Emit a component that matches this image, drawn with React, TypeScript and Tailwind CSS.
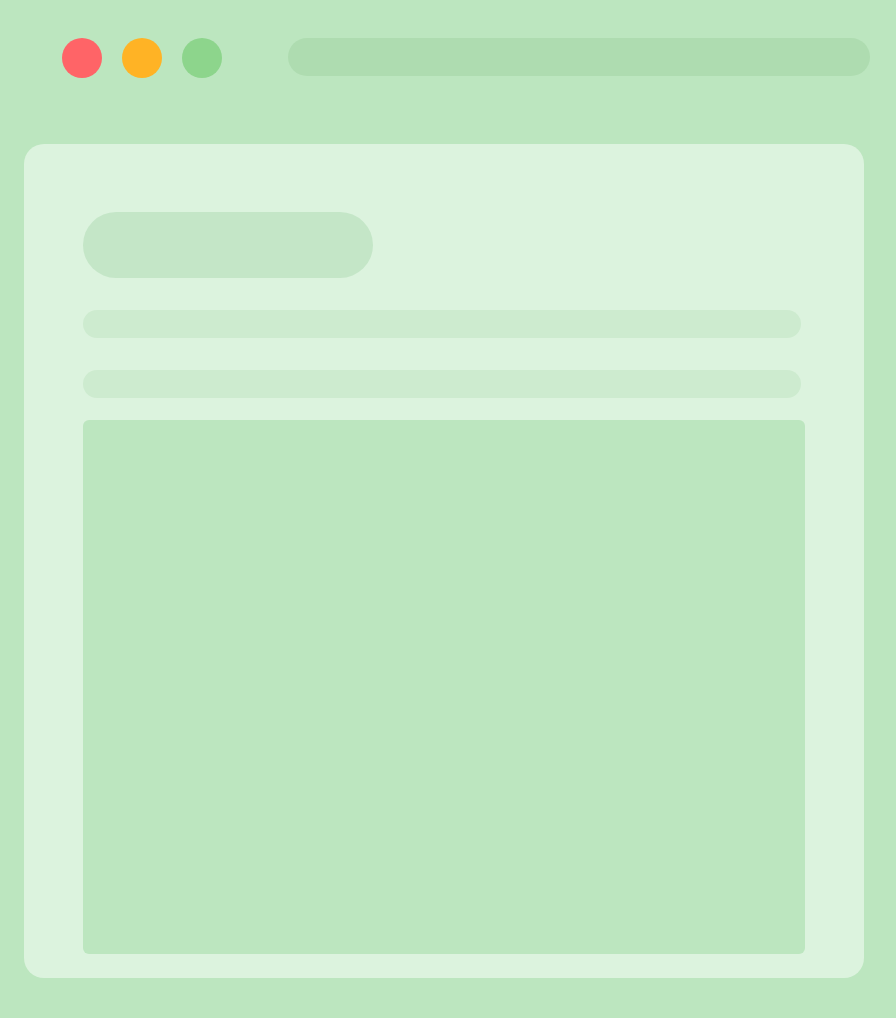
export default function App() {
  return (
    <div className="flex min-h-[1018px] w-full flex-col bg-[#bce6bf] font-['Liberation_Sans',sans-serif]">
      {/* window chrome */}
      <div className="flex items-start pl-[62px] pr-[26px] pt-[38px]">
        <div className="flex gap-5">
          <span className="h-10 w-10 rounded-full bg-[#ff6467]" />
          <span className="h-10 w-10 rounded-full bg-[#ffb325]" />
          <span className="h-10 w-10 rounded-full bg-[#8dd58c]" />
        </div>
        <div className="ml-[66px] h-[38px] flex-1 rounded-full bg-[#aedcb0]" />
      </div>

      {/* page card */}
      <div className="mx-6 mt-[66px] flex h-[834px] w-[840px] flex-col rounded-[20px] bg-[#dcf3de] pl-[59px] pt-[68px]">
        <div className="h-[66px] w-[290px] rounded-full bg-[#c4e6c7]" />
        <div className="mt-8 h-7 w-[718px] rounded-full bg-[#cdebcf]" />
        <div className="mt-8 h-7 w-[718px] rounded-full bg-[#cdebcf]" />
        <div className="mt-[22px] h-[534px] w-[722px] rounded-md bg-[#bce6bf]" />
      </div>
    </div>
  );
}
